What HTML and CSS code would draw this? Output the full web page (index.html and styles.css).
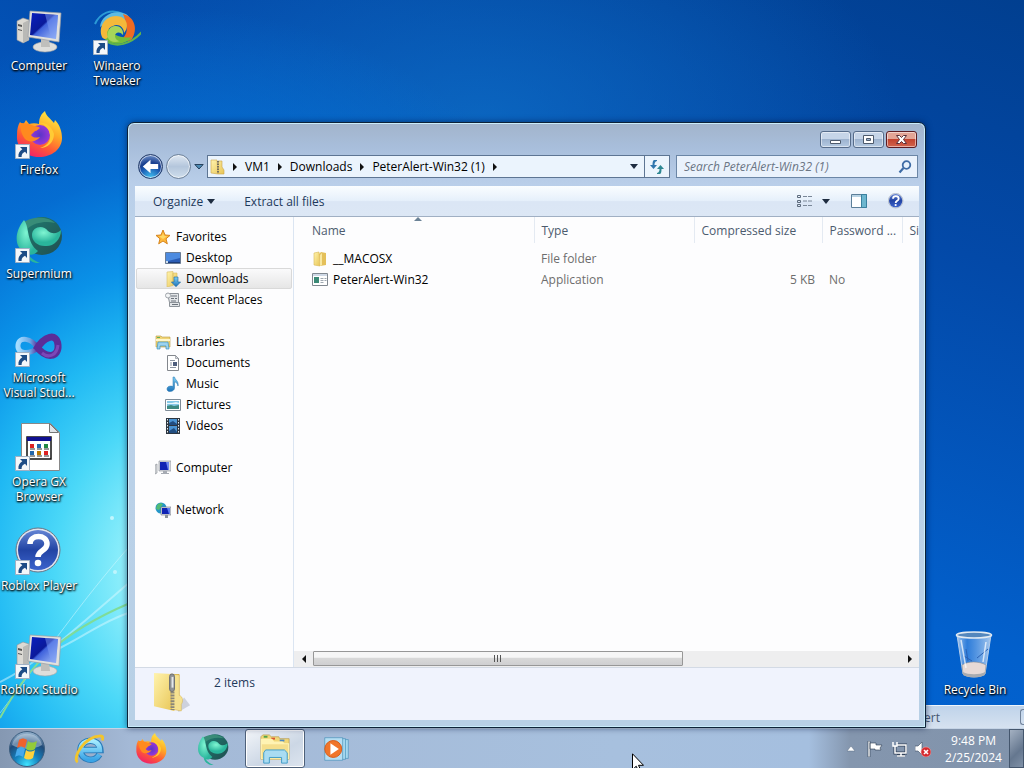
FILE: index.html
```
<!DOCTYPE html>
<html lang="en">
  <head>
    <meta charset="utf-8">
    <title>Desktop</title>
    <link rel="stylesheet" href="styles.css">
  </head>
  <body>
    <!-- shared icons -->
    <svg class="sprite" aria-hidden="true">
      <defs>
        <linearGradient id="screen" x1="0" y1="0" x2="1" y2="1">
          <stop offset="0" stop-color="#0a1fc0"/><stop offset=".45" stop-color="#0a1a9a"/>
          <stop offset=".5" stop-color="#3f62dc"/><stop offset="1" stop-color="#a9c4fa"/>
        </linearGradient>
        <linearGradient id="fox" x1=".8" y1="0" x2=".3" y2="1">
          <stop offset="0" stop-color="#fff04a"/><stop offset=".4" stop-color="#ffab26"/>
          <stop offset=".7" stop-color="#ff5a35"/><stop offset="1" stop-color="#f0206a"/>
        </linearGradient>
        <radialGradient id="foxball"><stop offset="0" stop-color="#5a35c8"/><stop offset="1" stop-color="#9838d8"/></radialGradient>
        <radialGradient id="teal" cx=".4" cy=".3"><stop offset="0" stop-color="#7ff5d2"/><stop offset="1" stop-color="#2ab59c"/></radialGradient>
        <linearGradient id="tealdark" x1="0" y1="0" x2="1" y2="1"><stop offset="0" stop-color="#1f7f72"/><stop offset="1" stop-color="#214d50"/></linearGradient>
        <linearGradient id="vs" x1="0" y1="0" x2="1" y2="0"><stop offset="0" stop-color="#a5dcff"/><stop offset=".6" stop-color="#6aa8e6"/><stop offset="1" stop-color="#5b2d98"/></linearGradient>
        <linearGradient id="help" x1="0" y1="0" x2="0" y2="1"><stop offset="0" stop-color="#6585d4"/><stop offset=".5" stop-color="#2244a4"/><stop offset="1" stop-color="#3c63cc"/></linearGradient>
        <linearGradient id="yellow" x1="0" y1="0" x2="1" y2="1"><stop offset="0" stop-color="#fff3ae"/><stop offset="1" stop-color="#e8c555"/></linearGradient>
        <linearGradient id="glass" x1="0" y1="0" x2="1" y2="0"><stop offset="0" stop-color="#d5e6f8" stop-opacity=".8"/><stop offset=".3" stop-color="#5c9be8" stop-opacity=".5"/><stop offset="1" stop-color="#dceafa" stop-opacity=".75"/></linearGradient>
        <radialGradient id="orb" cx=".5" cy=".95" r=".9"><stop offset="0" stop-color="#3fe3ff"/><stop offset=".4" stop-color="#1580bd"/><stop offset=".75" stop-color="#204a78"/><stop offset="1" stop-color="#8aa9c6"/></radialGradient>
        <linearGradient id="ie" x1="0" y1="0" x2="0" y2="1"><stop offset="0" stop-color="#a5ecff"/><stop offset="1" stop-color="#3aa4e6"/></linearGradient>
        <linearGradient id="arrowblue" x1="0" y1="0" x2="0" y2="1"><stop offset="0" stop-color="#7fd0f5"/><stop offset="1" stop-color="#1c72b8"/></linearGradient>
      </defs>

      <symbol id="i-link" viewBox="0 0 15 15">
        <path fill="#f4f7fa" stroke="#9fb0c4" d="M.5.5h14v14H.5z"/>
        <path fill="#1d4c86" d="M5 3h7v7l-2-2.200C7.500 9 6.500 10.500 6.600 13H3.500C3 9.500 4.500 7 7.300 5.300z"/>
      </symbol>
      <symbol id="i-pc" viewBox="0 0 48 48">
        <path fill="#dcdad4" stroke="#8f9298" stroke-width=".6" d="M2 14l6-3 6 2v20l-6 3-6-3z"/>
        <path fill="#b9b9b6" d="M8 16l6-3v20l-6 3z"/>
        <path fill="#555" d="M3 17l4 1v2l-4-1zM3 22l4 1v1l-4-1z"/>
        <ellipse cx="30" cy="40" rx="12" ry="5" fill="#dededb" stroke="#a3a3a3" stroke-width=".6"/>
        <path fill="#bfbfbc" d="M26 31h8l1 9h-9z"/>
        <path fill="#e2e1dd" stroke="#9a9ca4" stroke-width=".7" d="M15 4l31 2-2 29-31-5z"/>
        <path fill="url(#screen)" d="M17 6l26 2-2 24-26-4z"/>
        <path fill="#7b9cf4" opacity=".5" d="M30 7l13 1-2 24-5-1z"/>
      </symbol>
      <symbol id="i-winaero" viewBox="0 0 48 48">
        <path fill="none" stroke="#2b9ad6" stroke-width="2" d="M2 17C7 6 18 1 30 7"/>
        <path fill="none" stroke="#60b44c" stroke-width="2" d="M12 33c11 9 26 4 37-8"/>
        <path fill="#5dbbe0" d="M7 20C8 9 20 2 33 7c5 3 4 8 2 9-8-6-17-4-28 4z"/>
        <path fill="#ef6b22" d="M30 7c12 3 15 15 9 25-3 3-8 2-9-1 6-6 4-14 0-24z"/>
        <path fill="#73bd3a" d="M39 30c-7 9-22 9-29 0-2-4 1-9 5-9 5 7 13 11 24 9z"/>
        <path fill="#f4b93a" d="M9 30C5 20 12 9 23 9c11 0 14 11 8 17 0-6-6-10-11-7-5 2-7 6-5 11-2 3-5 2-6 0z"/>
        <path fill="#a6d65a" d="M15 31c-2-7 3-13 8-12 5 0 8 5 7 9-3-4-8-3-8 1 0 3 3 5 5 5-5 2-10 1-12-3z"/>
      </symbol>
      <symbol id="i-fox" viewBox="0 0 48 48">
        <path fill="url(#fox)" d="M24 46C10 46 1 36 2 24c0-6 1-10 3-13l3 3 3-5 3 4c3-1 7-1 10 0 0-6 2-10 6-13 1 5 5 7 9 12l1-3c5 5 7 12 7 18 0 11-10 19-23 19z"/>
        <circle cx="25" cy="24" r="10" fill="url(#foxball)"/>
        <path fill="#ff8a1f" d="M6 12c5 0 9 1 13 3 3 0 5 1 6 2-2 1-3 3-5 3l-4 4c2 3 5 3 9 2-4 5-11 6-15 2-4-5-5-11-4-16z"/>
        <path fill="#ffcb35" d="M24 12c7-1 13 4 15 11 0 8-6 14-14 14 9-3 12-9 9-17-2-4-5-7-10-8z"/>
      </symbol>
      <symbol id="i-teal" viewBox="0 0 48 48">
        <ellipse cx="27" cy="21" rx="20" ry="19" fill="url(#tealdark)"/>
        <path fill="#388c78" d="M8 8C16 1 33 1 40 8c-9-2-20-1-28 6z"/>
        <path fill="url(#teal)" d="M9 5c6 8 2 22 14 31-5 6-11 3-10 3 2 4 7 7 12 9-7 1-14-4-15-11C-1 33-1 17 9 5z"/>
        <path fill="url(#teal)" d="M17 20c0-8 11-11 16-4 5 4 10 2 13-1 0 10-8 17-16 16-8 0-13-5-13-11z"/>
      </symbol>
      <symbol id="i-vs" viewBox="0 0 48 48">
        <path fill="none" stroke="url(#vs)" stroke-width="5" d="M23 29C16 19 4 17 3 26s11 10 20 3"/>
        <path fill="none" stroke="#5b2d98" stroke-width="7" d="M21 31c8-14 21-18 22-5s-12 14-21 2"/>
        <path fill="none" stroke="#7c47b8" stroke-width="3" d="M27 34c7 6 15 2 16-8"/>
      </symbol>
      <symbol id="i-page" viewBox="0 0 48 48">
        <path fill="#fff" stroke="#888" d="M6.500.5h29l9 9v38h-38z"/>
        <path fill="#dfe3e8" stroke="#777" d="M34.500.5v9h9z"/>
        <path fill="#fff" stroke="#111" stroke-width="1.500" d="M12 14h24v22H12z"/>
        <path fill="#101090" d="M12 14h24v4H12z"/>
        <path fill="#d22" d="M15 21h4v4h-4zM29 28h4v4h-4z"/><path fill="#26a" d="M22 21h4v4h-4zM15 28h4v4h-4z"/><path fill="#284" d="M29 21h4v4h-4z"/><path fill="#b70" d="M22 28h4v4h-4z"/>
        <path stroke="#333" d="M15 26h5m2 0h5m2 0h5M15 33h5m2 0h5m2 0h5"/>
      </symbol>
      <symbol id="i-help" viewBox="0 0 48 48">
        <circle cx="23" cy="23" r="22" fill="#dfe4ee" stroke="#6b7687"/>
        <circle cx="23" cy="23" r="20" fill="url(#help)"/>
        <path fill="none" stroke="#fff" stroke-width="5.500" d="M15 17c0-10 17-10 17 0 0 7-9 6-9 13"/>
        <circle cx="23" cy="36" r="3.300" fill="#fff"/>
      </symbol>
      <symbol id="i-bin" viewBox="0 0 48 48">
        <path fill="url(#glass)" stroke="#b5cdea" d="M6 4l6 39c5 4 17 4 22 0l6-39z"/>
        <path fill="#e6d9d6" stroke="#888" stroke-width=".5" d="M11 34c6-4 17-4 24 0l-1 9c-5 4-17 4-22 0z"/>
        <path fill="#a8abb0" d="M12 41c5 3 17 3 22 0v3c-5 3-17 3-22 0z"/>
        <ellipse cx="23" cy="4" rx="17.500" ry="3" fill="#5487bd" stroke="#e2eaf2" stroke-width="1.600"/>
        <path fill="none" stroke="#2b62b4" d="M13 25l8 5m5-3l11-9M15 18l2 12"/>
        <path fill="none" stroke="#fff" stroke-width="1.500" opacity=".7" d="M10 9l5 28m20-26l-3 20"/>
      </symbol>
      <symbol id="i-zip" viewBox="0 0 40 44">
        <path fill="#aab0bd" opacity=".5" d="M26 42l12-7-6-8-7 8z"/>
        <path fill="#ddb84a" d="M18 3h9v37l-9-3z"/>
        <path fill="url(#yellow)" d="M1 2l18 1 3 38-21-5z"/>
        <path fill="#f6e28f" stroke="#d1ac48" stroke-width=".5" d="M18 3l9 1v21c4 1 4 7 2 9v7l-10-2z"/>
        <path stroke="#8b8778" stroke-width="4" stroke-dasharray="2 1" d="M20 21v19"/>
        <rect x="17" y="3" width="5" height="18" rx="2.500" fill="#8f9295" stroke="#6b6e73"/>
        <path stroke="#e4e7ea" stroke-width="2" d="M20 6v11"/>
      </symbol>

      <symbol id="s-star" viewBox="0 0 16 16"><path fill="#ffb93c" stroke="#d6841c" d="M8 1l2 5 5 .4-4 3.400 1.300 5L8 12l-4.300 2.800L5 9.800 1 6.400 6 6z"/><path fill="#ffd966" d="M8 4l1 3 3 .3-4 2.700-4-2.700L7 7z"/></symbol>
      <symbol id="s-desktop" viewBox="0 0 16 16"><path fill="#2b5cb4" stroke="#6b7c94" d="M.5 2.500h15v11H.5z"/><path fill="#4d8be0" d="M1 3h14v5L3 11 1 12z"/><path fill="#1c3c78" d="M1 12h14v1H1z"/><path fill="#cde" d="M1 11h2v2H1z"/></symbol>
      <symbol id="s-down" viewBox="0 0 16 16"><path fill="url(#yellow)" stroke="#d9bc62" stroke-width=".6" d="M2 1l6-.5v14L2 16zM8 2h4v12H8z"/><path fill="url(#arrowblue)" stroke="#17659f" stroke-width=".6" d="M9 6h4v5h2.600L11 15.700 6.400 11H9z"/></symbol>
      <symbol id="s-recent" viewBox="0 0 16 16"><path fill="#e2e5e8" stroke="#8c9299" d="M2.500 1.500h11v9h-9zM4.500 10.500h10v4h-10z"/><path stroke="#6c737c" d="M6 4h6M6 6.500h3m1 0h2M6 9h5m-4 3.500h6"/><circle cx="3" cy="3.500" r="2.500" fill="#f3f5f6" stroke="#a0a5ab"/></symbol>
      <symbol id="s-lib" viewBox="0 0 16 16"><path fill="#f0d477" stroke="#b99c44" stroke-width=".6" d="M1 2h5l1 1h8v10H1z"/><path fill="#5eb05b" d="M2 3h3v1H2z"/><path fill="#fff7cb" d="M1 5h14v2H1z"/><path fill="#9bd3ef" stroke="#3d93bd" stroke-width=".7" d="M3 8h10l1 7h-3v-3H5v3H2z"/></symbol>
      <symbol id="s-doc" viewBox="0 0 16 16"><path fill="#fff" stroke="#83878d" d="M2.500.5h8l3 3v12h-11z"/><path fill="#d5dae0" stroke="#83878d" stroke-width=".6" d="M10.500.5v3h3z"/><path stroke="#8b94a2" d="M5 5.500h5M5 8h2m-2 2h2m-2 2.500h6"/><path fill="#4d5d7c" d="M8 7h4v4H8z"/></symbol>
      <symbol id="s-music" viewBox="0 0 16 16"><path fill="url(#arrowblue)" stroke="#2071ac" stroke-width=".5" d="M8 1h1.500c.5 3 4.500 4 3.500 9-.5-3-2-4-3.500-4v6c0 4-7.500 5-7.500 1 0-2.500 3-3.500 6-2.500z"/></symbol>
      <symbol id="s-pic" viewBox="0 0 16 16"><path fill="#fff" stroke="#7f8c98" d="M.5 2.500h15v11H.5z"/><path fill="#86c9e8" d="M2 4h12v8H2z"/><path fill="#3c8a82" d="M2 9l4-1 3 1 5-1v4H2z"/><path fill="#e7f7fc" d="M2 6h5l4-1 3 1v1H2z"/></symbol>
      <symbol id="s-vid" viewBox="0 0 16 16"><path fill="#2d3640" d="M1 0h14v16H1z"/><path fill="#4b94d2" d="M4 1h8v6H4zM4 8h8v7H4z"/><path fill="#214d80" d="M4 5l4-2 4 3v1H4zM4 13l5-3 3 4v1H4z"/><path stroke="#e9edf0" stroke-dasharray="1.500 1.500" d="M2.500 1v14M13.500 1v14"/></symbol>
      <symbol id="s-pc" viewBox="0 0 16 16"><path fill="#dadcdf" stroke="#858a92" stroke-width=".6" d="M0 5l2-1v9l-2 1z"/><path fill="#d9dbe2" stroke="#858a92" stroke-width=".6" d="M4 1h12v10H4z"/><path fill="#1023b4" d="M5 2h9v8H5z"/><path fill="#6c86ee" d="M11 2h3v8h-1z"/><path fill="#a6abb3" d="M8 11h4v2h2v1H6v-1h2z"/></symbol>
      <symbol id="s-net" viewBox="0 0 16 16"><circle cx="6" cy="6" r="5.500" fill="#2496c8"/><path fill="#53bb75" d="M2 3c2-2 4-2 6-1L6 5 4 8 1 7z"/><path fill="#d9dbe2" stroke="#6d7480" stroke-width=".6" d="M6 5h10v8H6z"/><path fill="#1023b4" d="M7 6h8v6H7z"/><path fill="#5f7ff0" d="M12 6h3v6h-1z"/><path fill="#8d939c" d="M10 13h3v3h-3z"/></symbol>
      <symbol id="s-folder" viewBox="0 0 16 16"><path fill="url(#yellow)" stroke="#d9b956" stroke-width=".6" d="M2 2l5-1 1 14-6-1z"/><path fill="#e4c05a" d="M7 3l2-2 5 1v12l-6 1z"/><path fill="#f8e7a0" d="M8 4l2-2v12l-2 1z"/></symbol>
      <symbol id="s-app" viewBox="0 0 16 16"><path fill="#fff" stroke="#808890" d="M.5 1.500h15v12H.5z"/><path fill="#cfd9e6" d="M1 2h14v2H1z"/><path fill="#3b8a76" d="M2 5h5v6H2z"/><path stroke="#9fa8b1" d="M8.500 6.500h3m1 0h2m-6 2h3m1 0h2m-6 2h3"/></symbol>
      <symbol id="s-zip" viewBox="0 0 16 16"><path fill="url(#yellow)" stroke="#cda64a" stroke-width=".6" d="M2 1h6l1 14-7-1zM9 2h4v6l2 3v4H9z"/><path stroke="#77715c" stroke-width="2" stroke-dasharray="1.500 1" d="M9 2v12"/></symbol>
    </svg>

    <div class="desktop">
      <svg class="streaks" viewBox="0 0 240 240" aria-hidden="true">
        <path class="beam" d="M0 194C50 170 90 125 240 0"/>
        <path class="beam thin" d="M0 225C50 160 80 115 128 60"/>
        <path class="beam" d="M60 160C90 145 100 135 128 125"/>
        <path class="leaf" d="M0 230C30 175 60 145 130 115"/>
        <circle cx="112" cy="30" r="2" fill="#e4fcff" opacity=".7"/>
        <circle cx="115" cy="84" r="2" fill="#e4fcff" opacity=".6"/>
      </svg>

      <div class="icons">
        <button class="shortcut"><svg class="pic"><use href="#i-pc"/></svg><span>Computer</span></button>
        <button class="shortcut"><svg class="pic"><use href="#i-winaero"/></svg><svg class="badge"><use href="#i-link"/></svg><span>Winaero Tweaker</span></button>
        <button class="shortcut"><svg class="pic"><use href="#i-fox"/></svg><svg class="badge"><use href="#i-link"/></svg><span>Firefox</span></button>
        <button class="shortcut"><svg class="pic"><use href="#i-teal"/></svg><svg class="badge"><use href="#i-link"/></svg><span>Supermium</span></button>
        <button class="shortcut"><svg class="pic"><use href="#i-vs"/></svg><svg class="badge"><use href="#i-link"/></svg><span>Microsoft Visual Stud...</span></button>
        <button class="shortcut"><svg class="pic"><use href="#i-page"/></svg><svg class="badge"><use href="#i-link"/></svg><span>Opera GX Browser</span></button>
        <button class="shortcut"><svg class="pic"><use href="#i-help"/></svg><svg class="badge"><use href="#i-link"/></svg><span>Roblox Player</span></button>
        <button class="shortcut"><svg class="pic"><use href="#i-pc"/></svg><svg class="badge"><use href="#i-link"/></svg><span>Roblox Studio</span></button>
      </div>

      <button class="shortcut recycle"><svg class="pic"><use href="#i-bin"/></svg><span>Recycle Bin</span></button>

      <div class="back-window"><span>ert</span><i></i></div>

      <section class="window" aria-label="PeterAlert-Win32 (1)">
        <header class="titlebar">
          <button class="caption" aria-label="Minimize"><svg viewBox="0 0 29 15"><path fill="#fff" stroke="#4d5a6c" d="M9.500 8.500h10v3h-10z"/></svg></button>
          <button class="caption" aria-label="Maximize"><svg viewBox="0 0 29 15"><path fill="#fff" fill-rule="evenodd" stroke="#4d5a6c" d="M9.500 3.500h10v8h-10zM12.500 6.500h4v2h-4z"/></svg></button>
          <button class="caption close" aria-label="Close"><svg viewBox="0 0 29 15"><path fill="#fff" stroke="#5a3038" d="M9.500 3.500h3l2 2 2-2h3l-3 4 3 4h-3l-2-2-2 2h-3l3-4z"/></svg></button>
        </header>

        <nav class="navbar">
          <button class="round back" aria-label="Back"><svg viewBox="0 0 24 24"><path fill="#fff" d="M4 12l8-7v4.500h8v5h-8V19z"/></svg></button>
          <button class="round" aria-label="Forward"></button>
          <button class="recent" aria-label="Recent pages"><svg viewBox="0 0 10 6"><path fill="#4e8bb4" stroke="#27425e" d="M.8.5h8.400L5 5z"/></svg></button>
          <div class="address">
            <svg class="small"><use href="#s-zip"/></svg>
            <i class="right"></i><button>VM1</button>
            <i class="right"></i><button>Downloads</button>
            <i class="right"></i><button>PeterAlert-Win32 (1)</button>
            <i class="right"></i>
            <button class="drop" aria-label="Previous locations"><i class="down"></i></button>
            <button class="refresh" aria-label="Refresh"><svg viewBox="0 0 16 16"><path fill="#2f75ae" d="M5 1h3v1C6 2.500 5.500 4 5.500 6H8l-3.500 4L1 6h2.500C3.500 3 4 1.500 5 1z"/><path fill="#2e8793" d="M11 15H8v-1c2-.5 2.500-2 2.500-4H8l3.500-4L15 10h-2.500c0 3-.5 4.500-1.500 5z"/></svg></button>
          </div>
          <label class="search">
            <input type="text" aria-label="Search" placeholder="Search PeterAlert-Win32 (1)">
            <svg viewBox="0 0 14 14"><circle cx="8.500" cy="5" r="3.800" fill="#e6f1fb" stroke="#3d6ba5" stroke-width="1.800"/><path stroke="#3d6ba5" stroke-width="2.200" d="M5.500 8L1.500 12.500"/></svg>
          </label>
        </nav>

        <div class="toolbar">
          <button>Organize <i class="down"></i></button>
          <button>Extract all files</button>
          <div class="tools">
            <button class="view" aria-label="Change your view"><svg class="small" viewBox="0 0 16 14"><path fill="none" stroke="#5d6b7d" d="M.5 1.500h3v2h-3zM.5 6.500h3v2h-3zM.5 10.500h3v2h-3z"/><path stroke="#7a8798" d="M6 2.500h4m1 0h4M6 7h4m1 0h4m-9 4.500h4m1 0h4"/></svg><i class="down"></i></button>
            <button aria-label="Preview pane"><svg class="small" viewBox="0 0 16 14"><path fill="#fff" stroke="#5c7f99" d="M.5.5h15v13H.5z"/><path fill="#b8d3e4" d="M1 1h9v2H1z"/><path fill="#6cb6cf" stroke="#39809f" d="M10.500.5h5v13h-5z"/></svg></button>
            <button aria-label="Get help"><svg class="small"><use href="#i-help"/></svg></button>
          </div>
        </div>

        <div class="main">
          <nav class="tree">
            <ul>
              <li><a href="#"><svg class="small"><use href="#s-star"/></svg>Favorites</a></li>
              <li class="sub"><a href="#"><svg class="small"><use href="#s-desktop"/></svg>Desktop</a></li>
              <li class="sub current"><a href="#"><svg class="small"><use href="#s-down"/></svg>Downloads</a></li>
              <li class="sub"><a href="#"><svg class="small"><use href="#s-recent"/></svg>Recent Places</a></li>
            </ul>
            <ul>
              <li><a href="#"><svg class="small"><use href="#s-lib"/></svg>Libraries</a></li>
              <li class="sub"><a href="#"><svg class="small"><use href="#s-doc"/></svg>Documents</a></li>
              <li class="sub"><a href="#"><svg class="small"><use href="#s-music"/></svg>Music</a></li>
              <li class="sub"><a href="#"><svg class="small"><use href="#s-pic"/></svg>Pictures</a></li>
              <li class="sub"><a href="#"><svg class="small"><use href="#s-vid"/></svg>Videos</a></li>
            </ul>
            <ul>
              <li><a href="#"><svg class="small"><use href="#s-pc"/></svg>Computer</a></li>
            </ul>
            <ul>
              <li><a href="#"><svg class="small"><use href="#s-net"/></svg>Network</a></li>
            </ul>
          </nav>

          <div class="content">
            <div class="list">
              <table>
                <colgroup><col class="c-name"><col class="c-type"><col class="c-packed"><col class="c-pass"><col class="c-size"></colgroup>
                <thead>
                  <tr><th class="sorted">Name</th><th>Type</th><th>Compressed size</th><th>Password ...</th><th>Size</th></tr>
                </thead>
                <tbody>
                  <tr><td><span class="file"><svg class="small"><use href="#s-folder"/></svg>__MACOSX</span></td><td>File folder</td><td></td><td></td><td></td></tr>
                  <tr><td><span class="file"><svg class="small"><use href="#s-app"/></svg>PeterAlert-Win32</span></td><td>Application</td><td class="num">5 KB</td><td>No</td><td></td></tr>
                </tbody>
              </table>
            </div>
            <div class="scrollbar">
              <button aria-label="Scroll left"><i class="left"></i></button>
              <div class="track"><div class="thumb"><i></i><i></i><i></i></div></div>
              <button aria-label="Scroll right"><i class="right"></i></button>
            </div>
          </div>
        </div>

        <footer class="details">
          <svg class="zip"><use href="#i-zip"/></svg>
          <span>2 items</span>
        </footer>
      </section>
    </div>

    <footer class="taskbar">
      <button class="start" aria-label="Start">
        <svg viewBox="0 0 36 36"><circle cx="18" cy="18" r="17.500" fill="url(#orb)" stroke="#3b5d7e"/><path fill="#e8f3fb" opacity=".4" d="M3 14C6-1 30-1 33 14c-9 5-21 5-30 0z"/>
          <path fill="#f0622c" d="M10 9c3-2 5-2 8 0l-2 8c-3-2-5-2-8 0z"/><path fill="#93cb3a" d="M19 10c3 2 5 2 9 0l-2 8c-3 2-6 2-9 0z"/><path fill="#46a9ec" d="M8 18c3-2 5-2 8 0l-2 8c-3-2-5-2-8 0z"/><path fill="#ffd23c" d="M17 19c3 2 5 2 9 0l-2 8c-3 2-6 2-9 0z"/></svg>
      </button>
      <div class="apps">
        <button aria-label="Internet Explorer"><svg viewBox="0 0 34 34"><path fill="none" stroke="#2a7cba" stroke-width="7" d="M28 23c-5 9-20 6-20-5 0-12 20-14 21 0H10"/><path fill="none" stroke="url(#ie)" stroke-width="5" d="M28 23c-5 9-20 6-20-5 0-12 20-14 20.500 0L10 18.200"/><path fill="none" stroke="#f3c52c" stroke-width="3" d="M5 31C-1 27 11 4 29 3c3 0 3 2 2 5"/></svg></button>
        <button aria-label="Firefox"><svg><use href="#i-fox"/></svg></button>
        <button aria-label="Supermium"><svg><use href="#i-teal"/></svg></button>
        <button class="active" aria-label="Windows Explorer"><svg viewBox="0 0 34 34"><path fill="#f1d778" stroke="#b59a4c" stroke-width=".7" d="M2 4l2-2h7l2 2h8l1 2h10v22H2z"/><path fill="#51a548" d="M5 3h4v2H5z"/><path fill="#d85532" d="M13 5h4v2h-4z"/><path fill="#4e8ac2" d="M22 7h5v2h-5z"/><path fill="#fff3b3" d="M2 6h12l2 3h9l2 2h5v17H2z"/><path fill="#efd479" d="M3 12h28v15H3z" opacity=".65"/><path fill="#a9dcf2" stroke="#3e9bc8" d="M7 18h20l3 3v11h-6v-6H11v6H5V21z"/></svg></button>
        <button aria-label="Windows Media Player"><svg viewBox="0 0 34 34"><path fill="#a7d9ef" stroke="#468fb8" stroke-width=".7" d="M10 7h19v20H10z"/><path fill="#a7d9ef" stroke="#468fb8" stroke-width=".7" d="M7 6h19v22H7z"/><path fill="#b5def2" stroke="#468fb8" stroke-width=".7" d="M4 5h19v24H4z"/><circle cx="13" cy="17" r="9" fill="#f0752a" stroke="#d55a18"/><path fill="#fff" d="M10 11l9 6-9 6z"/></svg></button>
      </div>
      <div class="tray">
        <button aria-label="Show hidden icons"><svg viewBox="0 0 16 16"><path fill="#fff" stroke="#5b6d84" stroke-width=".5" d="M4 10l4-5 4 5z"/></svg></button>
        <button aria-label="Action Center"><svg viewBox="0 0 16 16"><path fill="#fff" stroke="#2e3d50" stroke-width=".6" d="M1 0h2v16H1zM3 2h6v2h6l-2 3 1 2H8V8H3z"/></svg></button>
        <button aria-label="Network"><svg viewBox="0 0 16 16"><path fill="none" stroke="#33435a" stroke-width="3" d="M6 4h9v8H4V6m6 6v3M6 15h8"/><path fill="none" stroke="#fff" stroke-width="1.500" d="M6 4h9v8H4V7m6 5v3M6 15h8M2 1v4h4V1M4 5v3"/></svg></button>
        <button aria-label="Volume muted"><svg viewBox="0 0 16 16"><path fill="#fff" stroke="#3b4b62" stroke-width=".6" d="M0 5h3l4-4v13l-4-4H0z"/><circle cx="11" cy="11" r="5" fill="#d62a2f" stroke="#f0a5a5" stroke-width=".6"/><path stroke="#fff" stroke-width="1.600" d="M9 9l4 4m0-4l-4 4"/></svg></button>
      </div>
      <button class="clock"><span>9:48 PM</span><span>2/25/2024</span></button>
      <button class="peek" aria-label="Show desktop"></button>
    </footer>

    <svg class="cursor" viewBox="0 0 12 19" aria-hidden="true"><path fill="#fff" stroke="#000" d="M.5.8v16l3.700-3.600 2.500 5.300 2.200-1-2.400-5.200h5z"/></svg>
  </body>
</html>
```
FILE: styles.css
```
* {
  box-sizing: border-box;
}
body {
  display: flex;
  flex-direction: column;
  height: 100vh;
  margin: 0;
  overflow: hidden;
  background: #0260cc;
  color: #000;
  font-family: "Open Sans", "Noto Sans", sans-serif;
  font-size: 12px;
  line-height: 15px;
}
button {
  border: 0;
  padding: 0;
  background: none;
  color: inherit;
  font: inherit;
}
svg {
  display: block;
  flex: none;
}
.sprite {
  position: absolute;
  width: 0;
  height: 0;
}
.small {
  width: 16px;
  height: 16px;
}

/* small triangles */
.right, .left, .down {
  flex: none;
  border: 4px solid transparent;
}
.right {
  border-left-color: #111;
  border-right: 0;
}
.left {
  border-right-color: #111;
  border-left: 0;
}
.down {
  border-top: 5px solid #1e2c40;
  border-bottom: 0;
}

/* wallpaper and icons */
.desktop {
  position: relative;
  flex: 1;
  min-height: 0;
  background:
    radial-gradient(ellipse 480px 560px at 190px 570px, #b8f7fd 0%, #8ceefb 14%, #4bd8f8 28%, #20b9f3 42%, #0a92e8 55%, rgba(5, 112, 212, 0.85) 72%, rgba(4, 90, 195, 0) 100%),
    radial-gradient(ellipse 420px 240px at 480px 120px, rgba(14, 112, 200, 0.7), rgba(16, 110, 200, 0)),
    linear-gradient(200deg, #013f90 0%, #0349a8 25%, #0260cc 60%, #0068da 100%);
}
.streaks {
  position: absolute;
  left: 0;
  bottom: 0;
  width: 240px;
  height: 240px;
}
.beam {
  fill: none;
  stroke: #d9faff;
  stroke-width: 2;
  opacity: 0.5;
}
.thin {
  stroke-width: 1;
}
.leaf {
  fill: none;
  stroke: #7fdc98;
  stroke-width: 2;
}
.icons {
  position: relative;
  display: grid;
  grid-template-rows: repeat(7, 104px);
  grid-template-columns: 78px 78px;
}
.shortcut {
  display: grid;
  grid-template-rows: 48px auto;
  grid-column: 1;
  align-content: start;
  justify-items: center;
  row-gap: 3px;
  padding: 7px 0 0;
  color: #fff;
  text-shadow: 0 1px 2px #000, 1px 1px 2px #000;
}
.shortcut:nth-child(2) {
  grid-row: 1;
  grid-column: 2;
}
.pic, .badge {
  grid-area: 1 / 1;
}
.pic {
  width: 48px;
  height: 48px;
}
.badge {
  align-self: end;
  justify-self: start;
  width: 15px;
  height: 15px;
  margin-left: 15px;
}
.recycle {
  position: absolute;
  right: 10px;
  bottom: 31px;
  width: 78px;
}
.back-window {
  position: absolute;
  right: 0;
  bottom: 0;
  display: flex;
  align-items: center;
  justify-content: space-between;
  width: 100px;
  height: 23px;
  border-top: 1px solid #eef5fc;
  background: linear-gradient(#bfd3ea, #d6e2f0);
  color: #44566e;
}
.back-window i {
  width: 4px;
  height: 16px;
  border: 1px solid #71839b;
  border-right: 0;
  border-radius: 3px 0 0 3px;
}

/* explorer window */
.window {
  position: absolute;
  top: 122px;
  right: 98px;
  bottom: 0;
  left: 127px;
  display: flex;
  flex-direction: column;
  padding: 0 6px 7px 7px;
  border: 1px solid #0d2238;
  border-radius: 7px 7px 0 0;
  background: linear-gradient(#a2b4cb, #a8bedb 24px, #b9cee9 60px, #bcd2ea 100px, #b8d0e6);
  box-shadow: inset 0 0 0 1px #c9ecfa, 0 0 6px rgba(0, 20, 60, 0.6);
}
.titlebar {
  display: flex;
  justify-content: flex-end;
  gap: 2px;
  padding: 8px 2px 6px;
}
.caption {
  width: 31px;
  height: 17px;
  border: 1px solid #566c8a;
  border-radius: 3px;
  background: linear-gradient(#c6d5e8 48%, #9db3cf 50%, #b5cae2);
  box-shadow: inset 0 0 0 1px rgba(255, 255, 255, 0.5);
}
.close {
  border-color: #5c1c22;
  background: linear-gradient(#e3a596 45%, #c2432f 50%, #d1644d);
}
.navbar {
  display: flex;
  align-items: center;
  padding: 0 1px 7px 3px;
}
.round {
  flex: none;
  width: 25px;
  height: 25px;
  margin-right: 3px;
  border: 1px solid #6d8199;
  border-radius: 50%;
  background: linear-gradient(#dfe8f2, #b4c6dc 50%, #cfdeec);
  box-shadow: inset 0 0 0 1px rgba(255, 255, 255, 0.6);
}
.back {
  border-color: #243c6a;
  background: radial-gradient(circle at 50% 100%, #42c5f4, #1a55ae 45%, #1a3f8e 60%, #8fb0e0);
}
.recent {
  width: 10px;
  margin-right: 3px;
}
.address {
  display: flex;
  flex: 1;
  align-items: center;
  gap: 8px;
  height: 23px;
  margin-right: 6px;
  padding-left: 1px;
  border: 1px solid #5d7593;
  background: #ebf4fd;
}
.drop {
  width: 20px;
  margin-left: auto;
}
.drop .down {
  display: block;
  width: 8px;
  margin: 0 auto;
}
.refresh {
  display: flex;
  align-items: center;
  align-self: stretch;
  width: 25px;
  margin-left: -8px;
  padding-left: 4px;
  border-left: 1px solid #5d7593;
}
.refresh svg {
  width: 16px;
}
.search {
  display: flex;
  align-items: center;
  flex: 0 1 242px;
  height: 23px;
  padding: 0 5px 0 7px;
  border: 1px solid #6b86a6;
  background: #eaf2fc;
}
.search input {
  flex: 1;
  min-width: 0;
  padding: 0;
  border: 0;
  outline: 0;
  background: none;
  font: italic 12px/15px "Open Sans", "Noto Sans", sans-serif;
}
.search input::placeholder {
  color: #6b7584;
  opacity: 1;
}
.search svg {
  width: 14px;
}
.toolbar {
  display: flex;
  align-items: center;
  gap: 29px;
  height: 31px;
  padding: 0 15px 0 18px;
  border-bottom: 1px solid #a0afc3;
  background: linear-gradient(#fafdff, #e6f0fb 48%, #dbe6f5 52%, #dce7f5);
  color: #1e395b;
}
.toolbar button {
  display: flex;
  align-items: center;
  gap: 4px;
}
.tools {
  display: flex;
  align-items: center;
  gap: 21px;
  margin-left: auto;
}
.toolbar .view {
  gap: 9px;
}
.main {
  display: flex;
  flex: 1;
  min-height: 0;
  background: #fdfdfe;
}
.tree {
  flex: none;
  width: 159px;
  padding: 9px 1px 0;
  border-right: 1px solid #dbe5f2;
}
.tree ul {
  margin: 0 0 21px;
  padding: 0;
  list-style: none;
}
.tree a {
  display: flex;
  align-items: center;
  gap: 5px;
  height: 21px;
  padding-left: 18px;
  border: 1px solid transparent;
  color: #000;
  text-decoration: none;
}
.tree .sub a {
  padding-left: 28px;
}
.tree .current a {
  border-color: #d9d9d9;
  border-radius: 2px;
  background: linear-gradient(#fafafb, #e6e6e6);
}
.content {
  display: flex;
  flex: 1;
  flex-direction: column;
  min-width: 0;
}
.list {
  flex: 1;
  overflow: hidden;
}
table {
  width: 708px;
  table-layout: fixed;
  border-collapse: collapse;
}
.c-name {
  width: 240px;
}
.c-type {
  width: 160px;
}
.c-packed {
  width: 128px;
}
.c-pass {
  width: 80px;
}
.c-size {
  width: 100px;
}
th, td {
  padding: 0 7px;
  text-align: left;
  font-weight: normal;
  white-space: nowrap;
}
th {
  position: relative;
  height: 26px;
  border-right: 1px solid #e4eaf2;
  color: #4c5b6e;
}
th:first-child, td:first-child {
  padding-left: 18px;
}
.sorted::after {
  content: "";
  position: absolute;
  top: 0;
  left: 50%;
  border: 4px solid transparent;
  border-top: 0;
  border-bottom-color: #6b8296;
}
td {
  height: 21px;
  color: #6d6d6d;
}
tbody::before {
  content: "";
  display: block;
  height: 5px;
}
.file {
  display: flex;
  align-items: center;
  gap: 5px;
  color: #000;
}
td.num {
  text-align: right;
}
.scrollbar {
  display: flex;
  height: 16px;
  background: #eeeeef;
}
.scrollbar button {
  display: flex;
  align-items: center;
  justify-content: center;
  width: 19px;
}
.track {
  flex: 1;
}
.thumb {
  display: flex;
  align-items: center;
  justify-content: center;
  gap: 2px;
  width: 63%;
  height: 15px;
  border: 1px solid #979797;
  border-radius: 1px;
  background: linear-gradient(#f6f6f6 40%, #d8d8d8 50%, #cfcfd1);
}
.thumb i {
  width: 1px;
  height: 7px;
  background: #555;
}
.details {
  display: flex;
  gap: 22px;
  height: 53px;
  padding: 3px 18px;
  border-top: 1px solid #d3dae5;
  background: #f0f3fd;
  color: #1e395b;
}
.details span {
  padding-top: 4px;
}
.zip {
  width: 39px;
  height: 43px;
}

/* taskbar */
.taskbar {
  display: flex;
  flex: none;
  align-items: center;
  height: 40px;
  border-top: 1px solid #c5d4e6;
  background: linear-gradient(90deg, #8598b2, #a4b9d6 130px, #a7c0de 60%, #a5bfdf 79%, #8496ae 83%, #8193ab);
  box-shadow: 0 -1px 0 #1c3145;
}
.start {
  width: 36px;
  margin: 0 14px 0 9px;
}
.apps {
  display: flex;
  flex: 1;
  gap: 2px;
}
.apps button {
  display: flex;
  align-items: center;
  justify-content: center;
  width: 60px;
  height: 39px;
}
.apps svg {
  width: 34px;
  height: 32px;
}
.apps .active {
  border: 1px solid #4e617a;
  border-radius: 3px;
  background: linear-gradient(150deg, #f2f5f9, #ccd7e5 60%, #dde5ef);
  box-shadow: inset 0 0 0 1px #fff;
}
.tray {
  display: flex;
  gap: 8px;
}
.tray svg {
  width: 16px;
}
.clock {
  display: flex;
  flex-direction: column;
  gap: 2px;
  width: 78px;
  padding-left: 7px;
  align-items: center;
  color: #fff;
}
.peek {
  width: 15px;
  height: 39px;
  border: 1px solid #44566d;
  background: linear-gradient(135deg, #a4b1c2, #65778f 60%, #8091a7);
}
.cursor {
  position: absolute;
  top: 753px;
  left: 632px;
  width: 12px;
  height: 19px;
}
```
